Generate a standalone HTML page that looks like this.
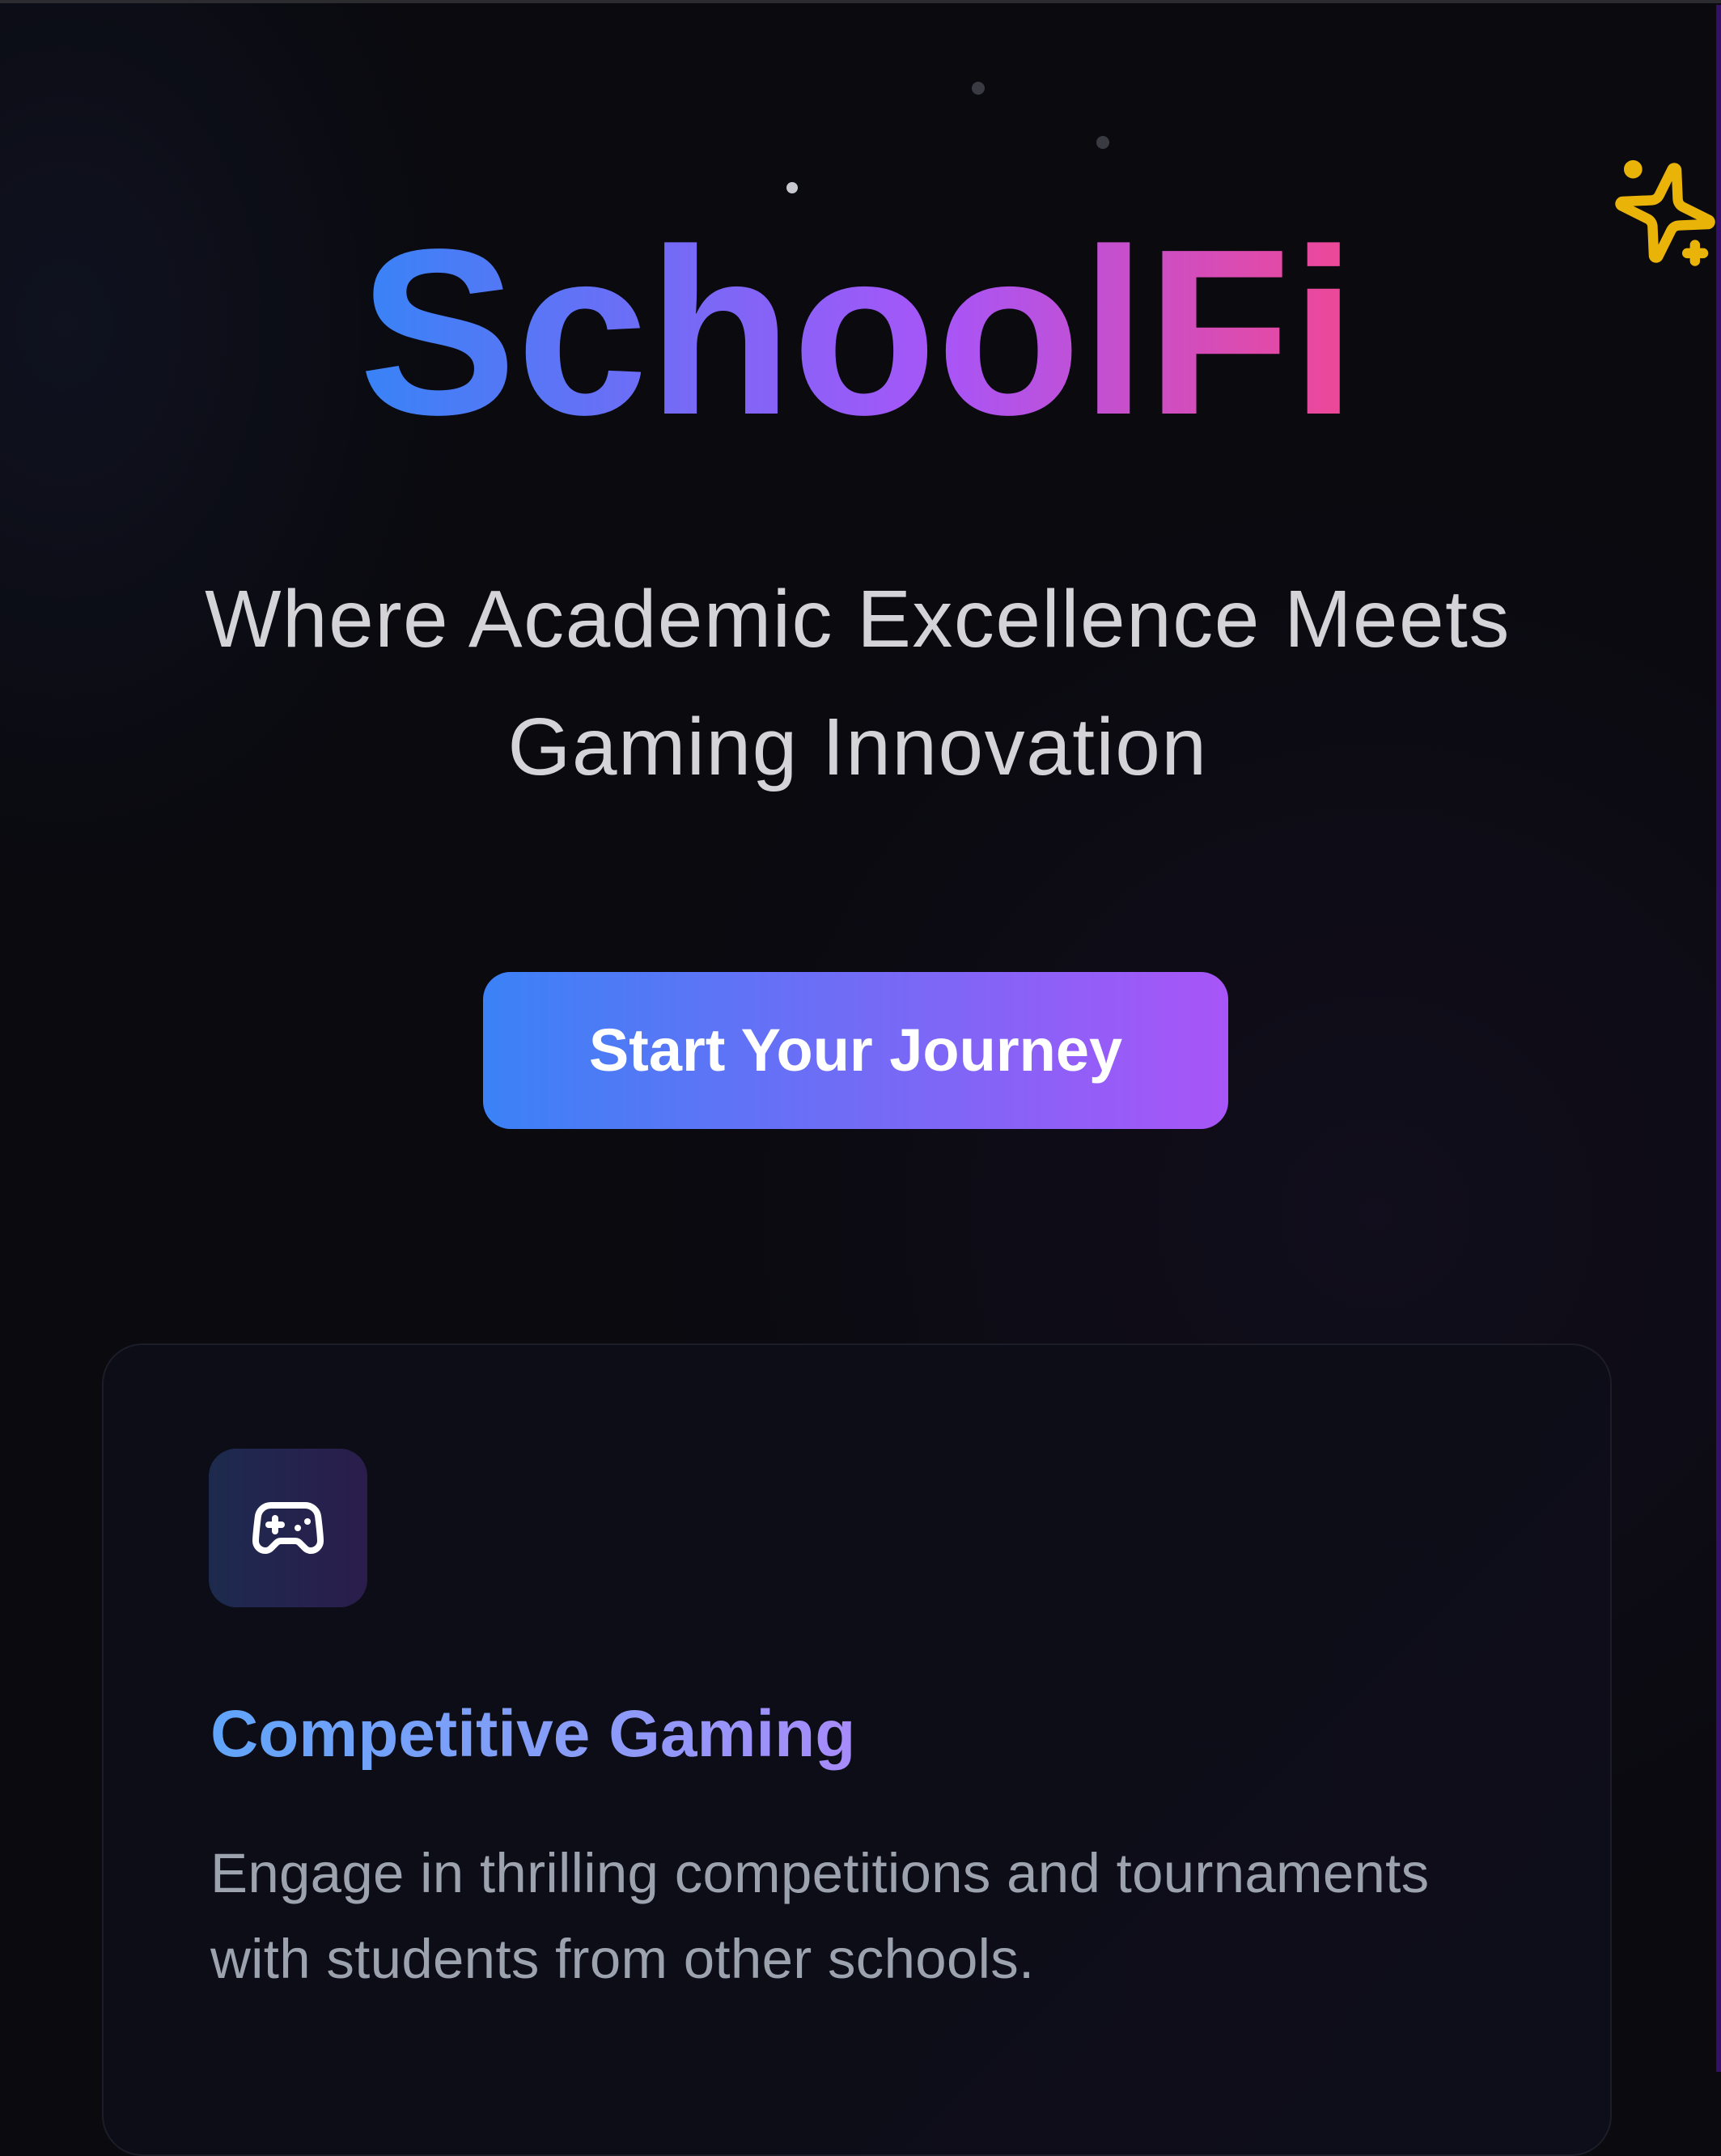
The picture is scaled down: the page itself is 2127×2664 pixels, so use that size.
<!DOCTYPE html>
<html style="background:#0a0a0f"><head><meta charset="utf-8"><style>
html,body{margin:0;padding:0;}
body{width:2127px;height:2560px;overflow:hidden;position:relative;background:#0a0a0f;font-family:"Liberation Sans",sans-serif;
background:radial-gradient(ellipse 500px 700px at 80px 400px,rgba(30,40,80,0.25),transparent),radial-gradient(ellipse 900px 900px at 1700px 1500px,rgba(40,25,70,0.25),transparent),#0a0a0f;}
.top{position:absolute;left:0;top:0;width:2127px;height:4px;background:#2c2c30;}
.rs{position:absolute;right:0;top:6px;width:6px;height:2554px;background:#35106a;}
.dot{position:absolute;border-radius:50%;}
h1{position:absolute;left:0;width:2120px;top:240px;margin:0;text-align:center;font-size:292px;font-weight:bold;line-height:340px;letter-spacing:0px;
background:linear-gradient(90deg,#3b82f6 22%,#a855f7 55%,#ec4899 78%);-webkit-background-clip:text;background-clip:text;color:transparent;}
.sub{position:absolute;left:0;width:2120px;top:686px;text-align:center;font-size:100px;line-height:158px;color:#d4d4d8;letter-spacing:1.5px;}
.btn{position:absolute;left:597px;top:1201px;width:921px;height:194px;border-radius:34px;background:linear-gradient(90deg,#3b82f6,#a855f7);
color:#fff;font-weight:bold;font-size:74px;line-height:194px;text-align:center;}
.card{position:absolute;left:126px;top:1660px;width:1862px;height:1000px;border-radius:50px;border:2px solid #1c1d28;background:linear-gradient(135deg,#0c0d16,#0e0d1a);}
.ic{position:absolute;left:258px;top:1790px;width:196px;height:196px;border-radius:34px;background:linear-gradient(90deg,#1d2a4e,#2a1d4c);}
.ic svg{position:absolute;left:50px;top:50px;}
.t{position:absolute;left:260px;top:2088px;font-size:82px;font-weight:bold;line-height:110px;background:linear-gradient(90deg,#60a5fa,#8b9cf8 60%,#a78bfa);-webkit-background-clip:text;background-clip:text;color:transparent;}
.d{position:absolute;left:260px;top:2262px;width:1740px;font-size:69px;line-height:106px;color:#9ca3af;letter-spacing:0.3px;}
</style></head><body>
<div class="top"></div><div class="rs"></div>
<div class="dot" style="left:1201px;top:101px;width:16px;height:16px;background:#3a3a42"></div>
<div class="dot" style="left:1355px;top:168px;width:16px;height:16px;background:#3a3a42"></div>
<div class="dot" style="left:972px;top:225px;width:14px;height:14px;background:#c8c8d0"></div>
<svg style="position:absolute;left:1990px;top:188px" width="136" height="150" viewBox="0 0 24 24" fill="none" stroke="#eab308" stroke-width="2.2" stroke-linecap="round" stroke-linejoin="round">
<g transform="rotate(12 12 12)"><path d="M9.937 15.5A2 2 0 0 0 8.5 14.063l-6.135-1.582a.5.5 0 0 1 0-.962L8.5 9.936A2 2 0 0 0 9.937 8.5l1.582-6.135a.5.5 0 0 1 .963 0L14.063 8.5A2 2 0 0 0 15.5 9.937l6.135 1.581a.5.5 0 0 1 0 .964L15.5 14.063a2 2 0 0 0-1.437 1.437l-1.582 6.135a.5.5 0 0 1-.963 0z"/></g>
<circle cx="5" cy="2.5" r="0.9" fill="#eab308"/><path d="M18.5 19v3.5M16.8 20.8h3.5"/></svg>
<h1>SchoolFi</h1>
<div class="sub">Where Academic Excellence Meets<br>Gaming Innovation</div>
<div class="btn">Start Your Journey</div>
<div class="card"></div>
<div class="ic"><svg width="96" height="96" viewBox="0 0 24 24" fill="none" stroke="#fff" stroke-width="2" stroke-linecap="round" stroke-linejoin="round"><line x1="6" x2="10" y1="11" y2="11"/><line x1="8" x2="8" y1="9" y2="13"/><line x1="15" x2="15.01" y1="12" y2="12"/><line x1="18" x2="18.01" y1="10" y2="10"/><path d="M17.32 5H6.68a4 4 0 0 0-3.978 3.59c-.006.052-.01.101-.017.152C2.604 9.416 2 14.456 2 16a3 3 0 0 0 3 3c1 0 1.5-.5 2-1l1.414-1.414A2 2 0 0 1 9.828 16h4.344a2 2 0 0 1 1.414.586L17 18c.5.5 1 1 2 1a3 3 0 0 0 3-3c0-1.545-.604-6.584-.685-7.258-.007-.05-.011-.1-.017-.151A4 4 0 0 0 17.32 5z"/></svg></div>
<div class="t">Competitive Gaming</div>
<div class="d">Engage in thrilling competitions and tournaments<br>with students from other schools.</div>
</body></html>
